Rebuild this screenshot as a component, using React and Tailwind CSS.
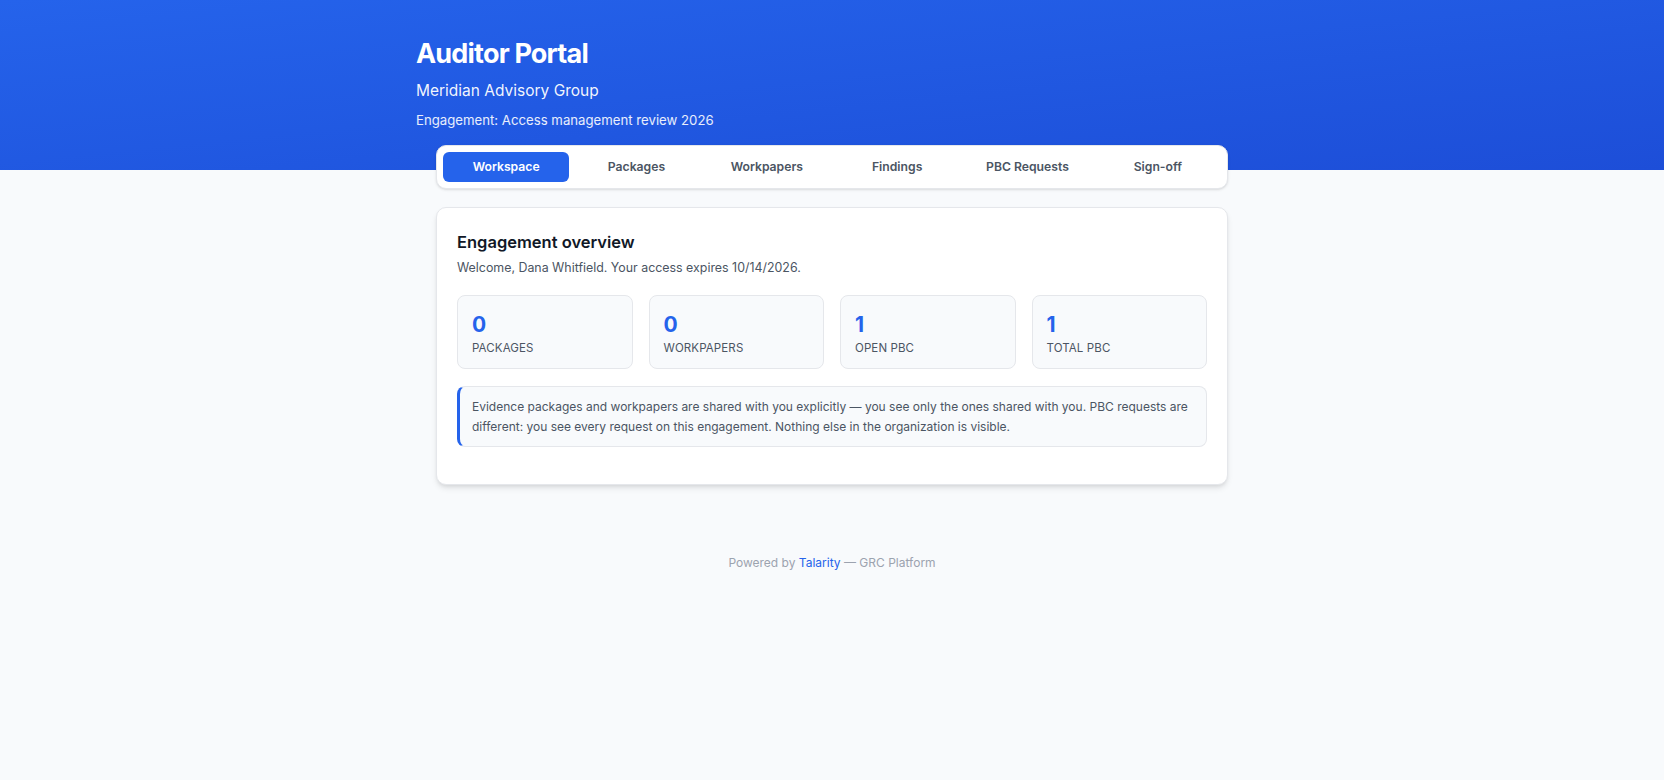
import React, { useState } from "react";

const tabs = ["Workspace", "Packages", "Workpapers", "Findings", "PBC Requests", "Sign-off"];

const stats = [
  { value: 0, label: "Packages" },
  { value: 0, label: "Workpapers" },
  { value: 1, label: "Open PBC" },
  { value: 1, label: "Total PBC" },
];

export default function App() {
  const [active, setActive] = useState("Workspace");

  return (
    <div className="min-h-screen bg-[#f8fafc] font-['Inter','Noto_Sans',sans-serif] text-[#111827]">
      {/* HEADER */}
      <header className="bg-linear-to-br from-[#2563eb] to-[#1d4ed8] text-white pt-[36px] pb-[40px]">
        <div className="max-w-[832px] mx-auto">
          <h1 className="text-[27px] leading-9 font-bold tracking-[-0.03em]">Auditor Portal</h1>
          <p className="mt-[5px] text-[15.5px] leading-7 text-white/95">Meridian Advisory Group</p>
          <p className="mt-[5px] text-[13.2px] leading-5 text-white/90">
            Engagement: Access management review 2026
          </p>
        </div>
      </header>

      <main className="max-w-[832px] mx-auto px-5">
        {/* TABS */}
        <nav className="-mt-[25px] bg-white rounded-[10px] border border-[#e5e7eb] shadow-sm p-1.5 flex gap-1">
          {tabs.map((t) => (
            <button
              key={t}
              onClick={() => setActive(t)}
              className={
                active === t
                  ? "flex-1 h-[30px] rounded-md bg-[#2563eb] text-white text-[12.2px] font-semibold"
                  : "flex-1 h-[30px] rounded-md text-[#4b5563] text-[12.2px] font-semibold hover:bg-gray-50"
              }
            >
              {t}
            </button>
          ))}
        </nav>

        {/* OVERVIEW CARD */}
        <section className="mt-[18px] bg-white rounded-[10px] border border-[#e5e7eb] shadow-md p-5">
          <h2 className="text-[16.5px] leading-7 font-semibold text-[#111827]">Engagement overview</h2>
          <p className="mt-0.5 text-[12.4px] leading-5 text-[#4b5563]">
            Welcome, Dana Whitfield. Your access expires 10/14/2026.
          </p>

          <div className="mt-[17px] grid grid-cols-4 gap-4">
            {stats.map((s) => (
              <div
                key={s.label}
                className="bg-[#f8fafc] border border-[#e5e7eb] rounded-lg px-3.5 pt-[15px] pb-3"
              >
                <div className="text-[21px] leading-7 font-bold text-[#2563eb]">{s.value}</div>
                <div className="mt-px text-[11.5px] leading-4 uppercase tracking-[0.01em] text-[#4b5563]">
                  {s.label}
                </div>
              </div>
            ))}
          </div>

          <div className="mt-[17px] mb-[17px] bg-[#f8fafc] border border-[#e5e7eb] border-l-[3px] border-l-[#2563eb] rounded-lg pl-3 pr-4 py-2.5 text-xs leading-relaxed text-[#4b5563]">
            Evidence packages and workpapers are shared with you explicitly — you see only the ones
            shared with you. PBC requests are different: you see every request on this engagement.
            Nothing else in the organization is visible.
          </div>
        </section>

        {/* FOOTER */}
        <footer className="mt-[68px] pb-10 text-center text-xs leading-5 text-[#9ca3af]">
          Powered by <span className="text-[#2563eb]">Talarity</span> — GRC Platform
        </footer>
      </main>
    </div>
  );
}
